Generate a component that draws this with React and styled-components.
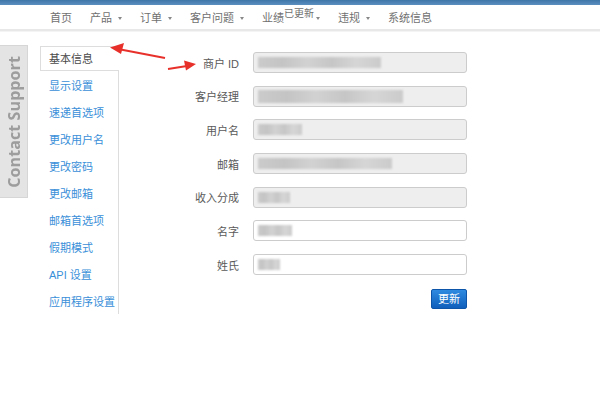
import React from "react";
import styled, { createGlobalStyle } from "styled-components";

const GlobalStyle = createGlobalStyle`
  html, body { margin: 0; padding: 0; background: #fff; }
  body { font-family: "Liberation Sans", "Noto Sans CJK SC", sans-serif; font-size: 11px; color: #555; }
  * { box-sizing: border-box; }
`;

const Page = styled.div`
  position: relative;
  width: 600px;
  height: 395px;
  overflow: hidden;
  background: #fff;
`;

const TopStrip = styled.div`
  height: 5px;
  background: linear-gradient(#3f76a8, #5a8fc0);
`;

const NavBar = styled.nav`
  height: 26px;
  display: flex;
  align-items: center;
  padding-left: 50px;
  gap: 18px;
  background: #fff;
  border-bottom: 2px solid #e8e8e8;
  box-shadow: 0 1px 0 #f4f4f4;
`;

const NavItem = styled.span`
  position: relative;
  display: inline-flex;
  align-items: center;
  gap: 6px;
  color: #707070;
  font-size: 11px;
  line-height: 14px;
  padding-top: 1px;
`;

const Caret = styled.i`
  display: inline-block;
  width: 0;
  height: 0;
  border-left: 2px solid transparent;
  border-right: 2px solid transparent;
  border-top: 3px solid #888;
  margin-top: 1px;
`;

const Sup = styled.span`
  font-size: 10px;
  color: #707070;
  margin-left: -6px;
  margin-right: -4px;
  position: relative;
  top: -4px;
`;

const Main = styled.div`
  display: flex;
  align-items: flex-start;
  padding-top: 14px;
`;

const ContactTab = styled.div`
  width: 28px;
  height: 153px;
  margin-right: 12px;
  background: #e4e4e4;
  border: 1px solid #d6d6d6;
  border-left: none;
  display: flex;
  align-items: center;
  justify-content: center;
`;

const ContactText = styled.span`
  writing-mode: vertical-rl;
  transform: rotate(180deg);
  font-family: "Open Sans", "Liberation Sans", sans-serif;
  font-weight: 700;
  font-size: 16px;
  color: #9d9d9d;
  white-space: nowrap;
  letter-spacing: 0.1px;
`;

const SideList = styled.ul`
  list-style: none;
  margin: 1px 0 0;
  padding: 0;
  width: 79px;
  border-right: 1px solid #ddd;
`;

const SideItem = styled.li`
  height: ${(p) => (p.$active ? "25px" : "27px")};
  display: flex;
  align-items: center;
  padding-left: ${(p) => (p.$active ? "8px" : "9px")};
  font-size: 11px;
  color: ${(p) => (p.$active ? "#4a4a4a" : "#3a8fd9")};
  background: #fff;
  white-space: nowrap;
  ${(p) =>
    p.$active &&
    `
    border: 1px solid #ddd;
    border-right: none;
    margin-right: -1px;
    position: relative;
    padding-bottom: 1px;
  `}
`;

const Form = styled.form`
  display: grid;
  grid-template-columns: 120px 214px;
  column-gap: 14px;
  row-gap: 12.7px;
  margin-top: 7px;
  align-items: center;
`;

const Label = styled.label`
  text-align: right;
  font-size: 11px;
  color: #5a5a5a;
`;

const Field = styled.div`
  height: 21px;
  border: 1px solid #ccc;
  border-radius: 3px;
  background: ${(p) => (p.$disabled ? "#eee" : "#fff")};
  display: flex;
  align-items: center;
  padding-left: 4px;
  overflow: hidden;
`;

const Redact = styled.span`
  display: block;
  height: ${(p) => p.$h || 11}px;
  background: linear-gradient(90deg, #cbcbcb 0%, #c4c4c4 20%, #d2d2d2 40%, #c6c6c6 60%, #d6d6d6 80%, #cbcbcb 100%);
  filter: blur(0.8px);
`;

const Actions = styled.div`
  grid-column: 2;
  display: flex;
  justify-content: flex-end;
  margin-top: 1px;
`;

const Button = styled.button`
  width: 36px;
  height: 20px;
  padding: 0;
  border: 1px solid #0c55a8;
  border-radius: 2px;
  background: linear-gradient(#2e8ae0, #0f5fbb);
  color: #fff;
  font-family: inherit;
  font-size: 11px;
  line-height: 18px;
`;

const Annot = styled.svg`
  position: absolute;
  left: 0;
  top: 0;
  pointer-events: none;
`;

const sideItems = [
  "显示设置",
  "速递首选项",
  "更改用户名",
  "更改密码",
  "更改邮箱",
  "邮箱首选项",
  "假期模式",
  "API 设置",
  "应用程序设置",
];

const fields = [
  { label: "商户 ID", w: 123, disabled: true },
  { label: "客户经理", w: 145, disabled: true, h: 13 },
  { label: "用户名", w: 44, disabled: true },
  { label: "邮箱", w: 134, disabled: true },
  { label: "收入分成", w: 32, disabled: true },
  { label: "名字", w: 34, disabled: false },
  { label: "姓氏", w: 22, disabled: false },
];

export default function App() {
  return (
    <>
      <GlobalStyle />
      <Page>
        <TopStrip />
        <NavBar>
          <NavItem>首页</NavItem>
          <NavItem>产品<Caret /></NavItem>
          <NavItem>订单<Caret /></NavItem>
          <NavItem>客户问题<Caret /></NavItem>
          <NavItem>业绩<Sup>已更新</Sup><Caret /></NavItem>
          <NavItem>违规<Caret /></NavItem>
          <NavItem>系统信息</NavItem>
        </NavBar>
        <Main>
          <ContactTab>
            <ContactText>Contact Support</ContactText>
          </ContactTab>
          <SideList>
            <SideItem $active>基本信息</SideItem>
            {sideItems.map((s) => (
              <SideItem key={s}>{s}</SideItem>
            ))}
          </SideList>
          <Form onSubmit={(e) => e.preventDefault()}>
            {fields.map((f) => (
              <React.Fragment key={f.label}>
                <Label>{f.label}</Label>
                <Field $disabled={f.disabled}>
                  <Redact $h={f.h} style={{ width: f.w }} />
                </Field>
              </React.Fragment>
            ))}
            <Actions>
              <Button type="submit">更新</Button>
            </Actions>
          </Form>
        </Main>
        <Annot width="600" height="395" viewBox="0 0 600 395">
          <line x1="165" y1="58" x2="118" y2="49" stroke="#e8302a" strokeWidth="2" />
          <polygon points="110,47.5 124,43 121,54" fill="#e8302a" />
          <line x1="168" y1="69" x2="187" y2="66" stroke="#e8302a" strokeWidth="2" />
          <polygon points="196,64 184,60.5 186,70.5" fill="#e8302a" />
        </Annot>
      </Page>
    </>
  );
}
